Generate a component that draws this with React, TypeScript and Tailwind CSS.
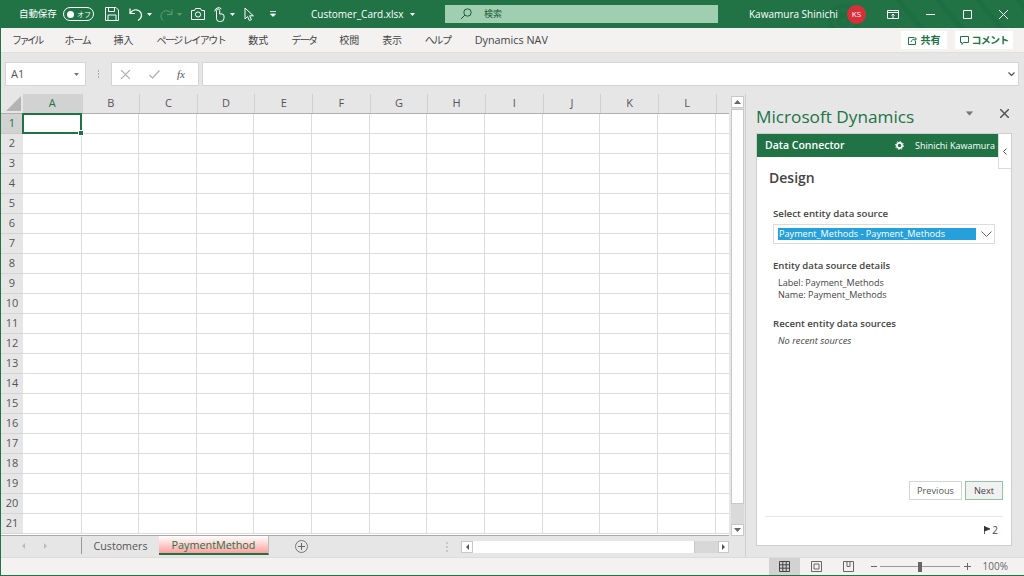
import React from "react";

const cols = ["A","B","C","D","E","F","G","H","I","J","K","L"];
const rows = Array.from({length:21},(_,i)=>i+1);
const F = {fontFamily:'"Open Sans","Noto Sans CJK JP",sans-serif'};

function Ic({w,h,children,className=""}:{w:number;h:number;children:React.ReactNode;className?:string}){
  return <svg width={w} height={h} viewBox={`0 0 ${w} ${h}`} fill="none" stroke="currentColor" strokeWidth="1" className={"shrink-0 "+className}>{children}</svg>;
}
const Caret=({className=""}:{className?:string})=>(<svg width="5" height="3" viewBox="0 0 5 3" className={"shrink-0 "+className}><path d="M0 0h5L2.5 3z" fill="currentColor"/></svg>);

function TitleBar(){
  return (
    <div className="h-[28px] shrink-0 bg-[#217346] text-white flex items-center text-[10px] relative overflow-hidden">
      <svg className="absolute right-0 top-0 opacity-10" width="340" height="28" viewBox="0 0 340 28" fill="none" stroke="#0d4a2a" strokeWidth="5">
        <circle cx="160" cy="20" r="14"/><circle cx="160" cy="20" r="5"/><path d="M210 -5l30 36M250 -5l30 36M290 -5l30 36M330 -5l30 36"/>
      </svg>
      <span className="ml-[18px] w-[38px] text-[9.5px] whitespace-nowrap tracking-[-0.1px]">自動保存</span>
      <div className="ml-[6px] w-[31px] h-[14px] rounded-full border border-white flex items-center pl-[3px] gap-[3px]">
        <div className="w-[7px] h-[7px] rounded-full bg-white"/>
        <span className="text-[7px] leading-none">オフ</span>
      </div>
      <Ic w={14} h={14} className="ml-[11px]"><path d="M.5.5h10.5l2.5 2.5v10.5H.5z"/><path d="M3.5.5v4h6v-4M3 13.5V8h8v5.5"/></Ic>
      <Ic w={14} h={14} className="ml-[10px]"><path d="M1 1.5v5h5" strokeWidth="1.2"/><path d="M1.2 6.2C3 3.6 5 2.5 7.5 2.8c3 .4 5 3 5 5.4 0 2.4-1.6 4.2-3.5 5.3" strokeWidth="1.2"/></Ic>
      <Caret className="ml-[4px]"/>
      <Ic w={13} h={13} className="ml-[8px] text-[#5d9c7c]"><path d="M12 1.5v5H7"/><path d="M11.8 6.2C10 3.6 8 2.5 5.5 2.8c-3 .4-4.5 3-4.5 5.4 0 2 1 3.6 2.5 4.8"/></Ic>
      <Caret className="ml-[4px] text-[#5d9c7c]"/>
      <Ic w={14} h={12} className="ml-[9px]"><path d="M.5 2.5h3l1-2h5l1 2h3v9H.5z"/><circle cx="7" cy="6.5" r="2.6"/></Ic>
      <Ic w={12} h={15} className="ml-[8px]"><path d="M3.5 9V3.5a1.6 1.6 0 013.2 0V7h2.3a2 2 0 012 2v2.2a3.3 3.3 0 01-3.3 3.3H6.5a3 3 0 01-3-3z"/><path d="M1.8 4.5a3.8 3.8 0 016.6-2.6"/></Ic>
      <Caret className="ml-[5px]"/>
      <Ic w={11} h={15} className="ml-[9px]"><path d="M1 1l0 11 2.6-2.4 1.8 4 2-1-1.8-3.8h3.8z"/></Ic>
      <svg width="8" height="6" viewBox="0 0 8 6" className="ml-[14px] shrink-0"><path d="M1 .5h6M1.5 3h5L4 5.5z" stroke="#fff" strokeWidth=".8" fill="#fff"/></svg>
      <span className="ml-[34px] w-[119px] text-[10px] flex items-center whitespace-nowrap">Customer_Card.xlsx<Caret className="ml-[6px]"/></span>
      <div className="relative ml-[15px] w-[273px] h-[18px] bg-[#9fcfb0] text-[#1d5a3a] flex items-center pl-[15px] text-[9px]">
        <Ic w={12} h={12}><circle cx="7.5" cy="4.5" r="3.7"/><path d="M4.8 7.2L1 11"/></Ic>
        <span className="ml-[12px]">検索</span>
      </div>
      <span className="relative ml-[31px] w-[89px] text-[10px] whitespace-nowrap">Kawamura Shinichi</span>
      <div className="relative ml-[9px] w-[19px] h-[19px] rounded-full bg-[#d8303a] flex items-center justify-center text-[8px]">KS</div>
      <Ic w={12} h={9} className="relative ml-[21px]"><path d="M.5.5h11v8H.5zM.5 2.5h11M6 8V4M4.5 5.5L6 4l1.5 1.5"/></Ic>
      <Ic w={9} h={1} className="relative ml-[27px]"><path d="M0 .5h9"/></Ic>
      <Ic w={9} h={9} className="relative ml-[28px]"><path d="M.5.5h8v8h-8z"/></Ic>
      <Ic w={9} h={9} className="relative ml-[27px]"><path d="M0 0l9 9M9 0L0 9"/></Ic>
    </div>
  );
}

function Ribbon(){
  return (
    <div className="h-[25px] shrink-0 bg-[#f3f2f1] flex items-center pl-[11px] pr-[11px] text-[10px] text-[#444] border-b border-[#dfdfdf]">
      <div className="flex items-center gap-[23px] whitespace-nowrap">
        <span className="tracking-[-2.6px]">ファイル</span>
        <span className="tracking-[-1.3px]">ホーム</span>
        <span>挿入</span>
        <span className="tracking-[-1.5px]">ページ レイアウト</span>
        <span>数式</span>
        <span className="tracking-[-1.7px]">データ</span>
        <span>校閲</span>
        <span className="tracking-[-0.3px]">表示</span>
        <span className="tracking-[-1.3px]">ヘルプ</span>
        <span className="text-[10.8px] ml-[1px]">Dynamics NAV</span>
      </div>
      <div className="ml-auto flex items-center gap-[8px] text-[#217346] text-[10px] font-semibold">
        <div className="h-[18px] w-[46px] bg-white flex items-center justify-center gap-[4px]">
          <Ic w={9} h={9}><path d="M6 1.5H.5v7h7V5M3 6c.5-2 2-3 5-3M6.5 1L8.5 3 6.5 5"/></Ic><span>共有</span>
        </div>
        <div className="h-[18px] w-[58px] bg-white flex items-center justify-center gap-[3px]">
          <Ic w={9} h={9}><path d="M.5.5h8v6H3.5L2 8.5v-2H.5z"/></Ic><span className="tracking-[-0.8px]">コメント</span>
        </div>
      </div>
    </div>
  );
}

function FormulaBar(){
  return (
    <div className="h-[41px] shrink-0 bg-[#e6e6e6] pl-[4px] pr-[5px] pt-[9px] flex items-start text-[#666]">
      <div className="w-[81px] h-[24px] bg-white border border-[#d4d4d4] flex items-center pl-[5px] pr-[6px] text-[11px] text-[#555]"><span>A1</span><Caret className="ml-auto text-[#777]"/></div>
      <div className="w-[25px] h-[24px] flex items-center justify-center"><svg width="2" height="8" viewBox="0 0 2 8"><path d="M.5 0v2M.5 3v2M.5 6v2" stroke="#aaa"/></svg></div>
      <div className="w-[88px] h-[24px] bg-white border border-[#d4d4d4] flex items-center pl-[9px] text-[#aaa]">
        <Ic w={9} h={9}><path d="M0 0l9 9M9 0L0 9" strokeWidth="1.1"/></Ic>
        <Ic w={11} h={9} className="ml-[19px]"><path d="M.5 5l3 3 7-7.5" strokeWidth="1.1"/></Ic>
        <span className="ml-[17px] text-[11px] italic text-[#555] leading-none" style={{fontFamily:'"Liberation Serif",serif'}}>fx</span>
      </div>
      <div className="ml-[3px] flex-1 h-[24px] bg-white border border-[#d4d4d4] flex items-center justify-end pr-[3px]">
        <Ic w={7} h={4} className="text-[#555]"><path d="M.5.5L3.5 3.5 6.5.5" strokeWidth="1.2"/></Ic>
      </div>
    </div>
  );
}

function Grid(){
  return (
    <div className="w-[728px] h-[442px] shrink-0 flex flex-col overflow-hidden bg-white border-b border-[#aaa]">
      <div className="h-[20px] shrink-0 bg-[#e6e6e6] flex border-b border-[#b0b0b0]">
        <div className="w-[22px] shrink-0 flex items-end justify-end pr-[2px] pb-[2px]">
          <svg width="15" height="15" viewBox="0 0 15 15"><path d="M15 0v15H0z" fill="#b4b4b4"/></svg>
        </div>
        {cols.map((c,i)=>(
          <div key={c} className={"shrink-0 flex items-center justify-center text-[11px] "+(i===0?"w-[58.5px] bg-[#d2d2d2] text-[#217346]":"w-[57.65px] border-l border-[#d0d0d0] text-[#555]")}>{c}</div>
        ))}
        <div className="flex-1 border-l border-[#d0d0d0]"/>
      </div>
      {rows.map(r=>(
        <div key={r} className="h-[20px] shrink-0 flex">
          <div className={"w-[22px] shrink-0 flex items-center justify-center text-[11px] border-b "+(r===1?"bg-[#d2d2d2] text-[#217346] border-[#c8c8c8]":"bg-[#e6e6e6] text-[#555] border-[#d4d4d4]")}>{r}</div>
          {cols.map((c,i)=>(
            <div key={c} className={"shrink-0 border-r border-b border-[#dcdcdc] relative "+(i===0?"w-[58.5px] ":"w-[57.65px] ")+(r===1&&c==="A"?"z-10":"")}>
              {r===1&&c==="A"&&<>
                <div className="absolute -left-[1px] -top-[1px] w-[60px] h-[21px] border-2 border-[#217346]"/>
                <div className="absolute -right-[3px] -bottom-[3px] w-[6px] h-[6px] bg-[#217346] border border-white"/>
              </>}
            </div>
          ))}
          <div className="flex-1 border-b border-[#dcdcdc]"/>
        </div>
      ))}
    </div>
  );
}

function VScroll(){
  return (
    <div className="w-[13px] shrink-0 ml-[2px] mt-[2px] h-[440px] bg-[#dadada] flex flex-col">
      <div className="h-[12px] bg-white border border-[#c8c8c8] flex items-center justify-center text-[#666]"><svg width="7" height="4" viewBox="0 0 7 4"><path d="M3.5 0L7 4H0z" fill="currentColor"/></svg></div>
      <div className="mt-[1px] h-[395px] bg-white border border-[#c8c8c8]"/>
      <div className="mt-auto h-[12px] bg-white border border-[#c8c8c8] flex items-center justify-center text-[#666]"><svg width="7" height="4" viewBox="0 0 7 4"><path d="M3.5 4L7 0H0z" fill="currentColor"/></svg></div>
    </div>
  );
}

function SheetTabs(){
  return (
    <div className="flex-1 flex items-start text-[11px] text-[#555]">
      <div className="w-[80px] h-[20px] flex items-center pl-[21px] gap-[19px] text-[#bbb] shrink-0">
        <svg width="3" height="6" viewBox="0 0 3 6"><path d="M3 0v6L0 3z" fill="currentColor"/></svg>
        <svg width="3" height="6" viewBox="0 0 3 6"><path d="M0 0v6l3-3z" fill="currentColor"/></svg>
      </div>
      <div className="w-px h-[17px] mt-[1px] bg-[#999] shrink-0"/>
      <span className="w-[77px] h-[21px] shrink-0 flex items-center justify-center text-[#555] text-[10.7px]">Customers</span>
      <div className="w-[110px] h-[19px] pt-[2px] shrink-0 flex items-center justify-center text-[#217346] text-[10.8px] bg-gradient-to-b from-white to-[#fba0a0] border-b-2 border-[#217346] border-r border-r-[#bbb]">PaymentMethod</div>
      <div className="ml-[26px] mt-[4px] w-[13px] h-[13px] rounded-full border border-[#777] flex items-center justify-center shrink-0">
        <svg width="7" height="7" viewBox="0 0 7 7"><path d="M3.5 0v7M0 3.5h7" stroke="#666"/></svg>
      </div>
      <svg width="2" height="10" viewBox="0 0 2 10" className="ml-[138px] mt-[6px] shrink-0"><path d="M1 0v2M1 4v2M1 8v2" stroke="#aaa"/></svg>
      <div className="ml-[13px] mt-[5px] w-[268px] h-[12px] bg-[#d8d8d8] flex shrink-0">
        <div className="w-[12px] bg-white border border-[#c8c8c8] flex items-center justify-center"><svg width="3" height="6" viewBox="0 0 3 6"><path d="M3 0v6L0 3z" fill="#555"/></svg></div>
        <div className="w-[222px] bg-white border-r border-[#c8c8c8]"/>
        <div className="ml-auto w-[11px] bg-white border border-[#c8c8c8] flex items-center justify-center"><svg width="3" height="6" viewBox="0 0 3 6"><path d="M0 0v6l3-3z" fill="#555"/></svg></div>
      </div>
    </div>
  );
}

function Pane(){
  return (
    <div className="flex-1 border-l border-[#cfcfcf] flex flex-col pl-[10px] pr-[12px] min-w-0">
      <div className="h-[39px] shrink-0 flex items-center text-[#217346]">
        <span className="text-[17.2px] whitespace-nowrap relative top-[3px]">Microsoft Dynamics</span>
        <Caret className="ml-auto mr-[28px] text-[#777] scale-150"/>
        <Ic w={9} h={9} className="mr-[3px] text-[#555]"><path d="M0 0l9 9M9 0L0 9" strokeWidth="1.5"/></Ic>
      </div>
      <div className="h-[413px] bg-white border border-[#cfcfcf] flex flex-col relative text-[#444]">
        <div className="h-[23px] w-[241px] shrink-0 bg-[#217346] text-white flex items-center pl-[8px] pr-[3px] text-[10px]">
          <span className="font-semibold text-[10.5px]">Data Connector</span>
          <svg width="9" height="9" viewBox="0 0 9 9" className="ml-auto"><circle cx="4.5" cy="4.5" r="2.6" fill="none" stroke="#fff" strokeWidth="1.7"/><circle cx="4.5" cy="4.5" r="4" fill="none" stroke="#fff" strokeWidth="1" strokeDasharray="1.4 1.7"/></svg>
          <span className="ml-[11px] text-[9px] whitespace-nowrap">Shinichi Kawamura</span>
        </div>
        <div className="absolute right-0 top-0 w-[13px] h-[35px] bg-white border-l border-b border-[#dcdcdc] flex items-center justify-center">
          <Ic w={4} h={7} className="text-[#555]"><path d="M3.5.5L.5 3.5l3 3"/></Ic>
        </div>
        <div className="pl-[12px] pt-[11px] text-[14px] font-semibold leading-[19px] text-[#444]">Design</div>
        <div className="pl-[16px] flex flex-col flex-1 min-h-0">
          <div className="mt-[20px] text-[9.7px] font-semibold leading-[14px]">Select entity data source</div>
          <div className="mt-[3px] w-[222px] h-[20px] border border-[#dcdcdc] flex items-center pl-[4px]">
            <div className="w-[198px] h-[12px] bg-[#26a0da] text-white text-[9.15px] leading-[12px] pl-[1px] whitespace-nowrap">Payment_Methods - Payment_Methods</div>
            <Ic w={11} h={6} className="ml-[5px] text-[#666]"><path d="M.5.5l5 5 5-5"/></Ic>
          </div>
          <div className="mt-[15px] text-[9.6px] font-semibold leading-[14px]">Entity data source details</div>
          <div className="mt-[4px] pl-[5px] text-[9.05px] leading-[12px]">Label: Payment_Methods</div>
          <div className="pl-[5px] text-[9.05px] leading-[12px]">Name: Payment_Methods</div>
          <div className="mt-[16px] text-[9.6px] font-semibold leading-[14px]">Recent entity data sources</div>
          <div className="mt-[3px] pl-[5px] text-[9.3px] italic leading-[13px]">No recent sources</div>
          <div className="mt-auto mr-[8px] flex justify-end gap-[3px] text-[9.2px]">
            <div className="w-[53px] h-[19px] border border-[#d4d4d4] flex items-center justify-center text-[#555]">Previous</div>
            <div className="w-[38px] h-[19px] border border-[#8fc4a5] bg-[#f1f1f1] flex items-center justify-center text-[#444]">Next</div>
          </div>
        </div>
        <div className="mt-[16px] mx-[8px] border-t border-[#e6e6e6] h-[29px] flex items-center justify-end pr-[5px] text-[10px] pb-[2px] shrink-0">
          <svg width="6" height="8" viewBox="0 0 6 8" className="mr-[2px]"><path d="M.5 0v8M.5 .5L6 3 .5 5z" stroke="#333" strokeWidth=".8" fill="#333"/></svg>2
        </div>
      </div>
    </div>
  );
}

function StatusBar(){
  return (
    <div className="h-[19px] shrink-0 bg-[#f3f2f1] border-t border-[#dcdcdc] border-b border-b-[#217346] flex items-center text-[10px] text-[#666]">
      <div className="ml-auto w-[31px] h-full bg-[#d2d2d2] flex items-center justify-center text-[#444]">
        <Ic w={11} h={11}><path d="M.5.5h10v10H.5zM.5 3.8h10M.5 7.2h10M3.8.5v10M7.2.5v10"/></Ic>
      </div>
      <Ic w={11} h={11} className="ml-[11px]"><path d="M.5.5h10v10H.5zM3 3h5v5H3z"/></Ic>
      <Ic w={11} h={11} className="ml-[21px]"><path d="M.5.5h10v10H.5zM4 .5v5h3v-5"/></Ic>
      <Ic w={6} h={1} className="ml-[17px]"><path d="M0 .5h6"/></Ic>
      <div className="ml-[3px] w-[80px] h-px bg-[#999] flex items-center justify-center"><div className="w-[4px] h-[10px] bg-[#666] shrink-0"/></div>
      <Ic w={7} h={7} className="ml-[4px]"><path d="M0 3.5h7M3.5 0v7"/></Ic>
      <span className="ml-[12px] mr-[16px]">100%</span>
    </div>
  );
}

export default function App(){
  return (
    <div className="w-[1024px] h-[576px] overflow-hidden flex flex-col bg-[#e6e6e6] border-l border-[#217346]" style={F}>
      <TitleBar/>
      <Ribbon/>
      <FormulaBar/>
      <div className="flex-1 flex min-h-0">
        <div className="w-[744px] shrink-0 flex flex-col">
          <div className="flex shrink-0"><Grid/><VScroll/></div>
          <SheetTabs/>
        </div>
        <Pane/>
      </div>
      <StatusBar/>
    </div>
  );
}
